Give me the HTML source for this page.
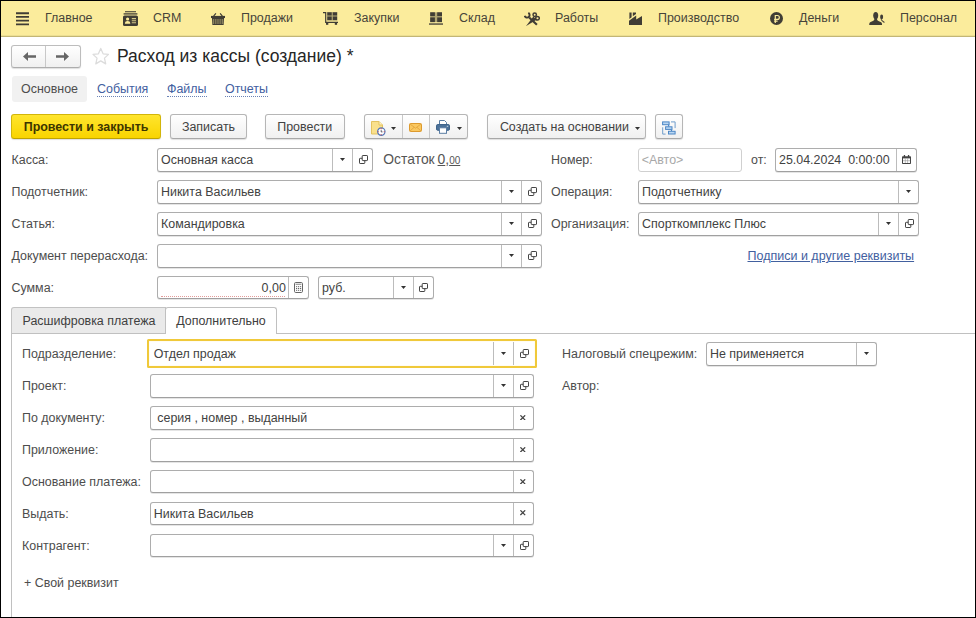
<!DOCTYPE html>
<html lang="ru"><head><meta charset="utf-8"><title>Расход из кассы (создание) *</title>
<style>
html,body{margin:0;padding:0;background:#fff}
body{width:976px;height:618px;position:relative;overflow:hidden;font-family:"Liberation Sans",sans-serif;font-size:12.45px;color:#333}
#frame{position:absolute;left:0;top:0;width:974px;height:616px;border:1px solid #000;z-index:50;pointer-events:none}
#top{position:absolute;left:1px;top:1px;width:974px;height:35px;background:#fbec9c;border-bottom:1px solid #c3b676;box-shadow:inset 0 -1px 0 #ecdf93}
.mic{position:absolute;line-height:0}
.mtx{position:absolute;top:9.900px;line-height:16px;color:#47443a;white-space:nowrap}
.abs{position:absolute}
.lbl{position:absolute;line-height:20px;white-space:nowrap;color:#4d4d4d}
.fld{position:absolute;box-sizing:border-box;border:1px solid #adadad;border-bottom-color:#a0a0a0;border-radius:3px;background:#fff;display:flex;box-shadow:0 1px 0 rgba(0,0,0,.10)}
.fld .val{flex:1;min-width:0;padding:.2px 4px 0 3px;line-height:22px;white-space:pre;overflow:hidden;color:#424242}
.fld .fb{box-sizing:border-box;border-left:1px solid #bcbcbc;display:flex;align-items:center;justify-content:center;flex:none}
.fld.pn .val{padding-left:2.800px}
.fld.sm .val{padding-right:2.200px}
.fld.dis{border-color:#d0d0d0;box-shadow:none}
.fld.dis .val{color:#a8a8a8;padding-left:2.700px}
.fld.act{border:2px solid #f0c93a;box-shadow:inset 0 0 1px 0 #f7df86;border-radius:1.500px}
.fld.act .val{line-height:24px;padding:.4px 4px 0 4.700px}
.fld.act .fb{margin:1px 0;border-left-color:#bcbcbc}
.btn{position:absolute;box-sizing:border-box;border:1px solid #b6b6b6;border-bottom-color:#a8a8a8;border-radius:3px;background:linear-gradient(#fff,#f0f0f0);box-shadow:0 1px 1px rgba(0,0,0,.13);display:flex;align-items:center;justify-content:center;white-space:nowrap;color:#424242}
.btn.tx{padding-top:1.800px}
.btn.def{background:linear-gradient(#ffe52e,#f9d400);border-color:#d2b50a;border-bottom-color:#bfa300;font-weight:bold;color:#3d3500}
.lnk{color:#42609f}
</style></head><body>
<div id="frame"></div>
<div id="top"></div>
<div class="mic" style="left:16px;top:12px"><svg width="13" height="13.500" viewBox="0 0 13 13.500"><path d="M0 1.250h13M0 4.950h13M0 8.650h13M0 12.350h13" stroke="#403d35" stroke-width="1.800"/></svg></div><div class="mtx" style="left:45px">Главное</div>
<div class="mic" style="left:123px;top:11px"><svg width="15" height="15" viewBox="0 0 15 15"><path d="M2 .7h11" stroke="#403d35" stroke-opacity=".9" stroke-width="1.200"/><path d="M.6 2.900h13.800" stroke="#403d35" stroke-width="1.300"/><rect x="0" y="4.500" width="15" height="10.500" rx="1.600" fill="#403d35"/><circle cx="4.600" cy="8" r="1.600" fill="#fbec9c"/><path d="M1.900 12.700c0-2 1.200-2.700 2.700-2.700s2.700 .7 2.700 2.700z" fill="#fbec9c"/><path d="M8.800 7.600h4.200M8.800 9.700h4.200M8.800 11.800h4.200" stroke="#fbec9c" stroke-opacity=".8" stroke-width="1.100"/></svg></div><div class="mtx" style="left:153px">CRM</div>
<div class="mic" style="left:211px;top:13px"><svg width="14" height="12" viewBox="0 0 14 12"><path d="M2.600 3.200L4.900 .3M11.400 3.200L9.100 .3" stroke="#403d35" stroke-width="1.100" fill="none"/><rect x="0" y="2.900" width="14" height="2.100" fill="#403d35"/><path d="M.9 5h12.200l-.5 7H1.400z" fill="#403d35"/><path d="M2.400 6v5M4.250 6v5M6.100 6v5M7.950 6v5M9.800 6v5M11.650 6v5" stroke="#fbec9c" stroke-opacity=".7" stroke-width=".65"/></svg></div><div class="mtx" style="left:241px">Продажи</div>
<div class="mic" style="left:323px;top:12px"><svg width="15" height="13" viewBox="0 0 15 13"><path d="M0 .6h2.700v9.700h12.300" stroke="#403d35" stroke-width="1.200" fill="none"/><rect x="4" y="0" width="10.300" height="8.600" fill="#403d35" fill-opacity=".35"/><rect x="4.300" y=".3" width="4.400" height="3.200" fill="#403d35"/><rect x="9.800" y=".3" width="4.300" height="3.200" fill="#403d35"/><rect x="4.300" y="4.500" width="4.400" height="3.600" fill="#403d35"/><rect x="9.800" y="4.500" width="4.300" height="3.600" fill="#403d35"/><rect x="3" y="10.500" width="2.300" height="2.300" fill="#403d35"/><rect x="11.800" y="10.500" width="2.300" height="2.300" fill="#403d35"/></svg></div><div class="mtx" style="left:354px">Закупки</div>
<div class="mic" style="left:429px;top:12px"><svg width="14" height="13" viewBox="0 0 14 13"><rect x="1.200" y=".3" width="11.800" height="9.800" fill="#403d35" fill-opacity=".4"/><rect x="1.200" y=".3" width="4.700" height="3.800" fill="#403d35"/><rect x="8.200" y=".3" width="4.800" height="3.800" fill="#403d35"/><rect x="1.200" y="5.400" width="4.700" height="4.700" fill="#403d35"/><rect x="8.200" y="5.400" width="4.800" height="4.700" fill="#403d35"/><rect x="0" y="11.400" width="14" height="1.300" fill="#403d35"/></svg></div><div class="mtx" style="left:459px">Склад</div>
<div class="mic" style="left:524px;top:11.5px"><svg width="16" height="14.500" viewBox="0 0 16 14.500" fill="none" stroke="#403d35"><path d="M.7 3.800A2.500 2.500 0 1 0 4.300 .9" stroke-width="1.900"/><path d="M5.200 5.500L12.900 12.700" stroke-width="2.100"/><circle cx="10.700" cy="2.800" r="1.700" stroke-width="1.500"/><circle cx="13.500" cy="6.200" r="1.800" stroke-width="1.500"/><path d="M9.400 4.400L12.500 7.700L2 14.100z" fill="#403d35" stroke="none"/></svg></div><div class="mtx" style="left:555px">Работы</div>
<div class="mic" style="left:628.5px;top:12px"><svg width="13.500" height="13" viewBox="0 0 13.500 13" fill="#403d35"><path d="M0 13V8.800L7.200 3.400V7.600L13.200 4V13z"/><path d="M.4 .4h2.200v4.850L.4 6.900z"/><path d="M3.800 .4H7v1.550L3.800 4.350z"/></svg></div><div class="mtx" style="left:658px">Производство</div>
<div class="mic" style="left:770px;top:12px"><svg width="13" height="13" viewBox="0 0 13 13"><circle cx="6.500" cy="6.500" r="6.500" fill="#403d35"/><path d="M5.300 10.900V3.500h2.100a1.900 1.900 0 0 1 0 3.900H4.100M4.100 9.100H7.600" stroke="#fbec9c" stroke-width="1.200" fill="none"/></svg></div><div class="mtx" style="left:799px">Деньги</div>
<div class="mic" style="left:869px;top:12px"><svg width="16" height="13" viewBox="0 0 16 13" fill="#403d35"><ellipse cx="12.600" cy="5" rx="1.500" ry="2.400"/><path d="M12.100 7.400c.5 1.200 1.500 1.900 3.300 3.100" stroke="#403d35" stroke-width="1.100" fill="none"/><ellipse cx="6.700" cy="3.600" rx="2.500" ry="3.500"/><path d="M5.300 6h2.800v1.600c0 .9 .8 1.300 2.400 1.800c1.800 .5 2.600 1.200 2.600 3.500H.2c0-2.300 .8-3 2.600-3.500c1.600-.5 2.500-.9 2.500-1.800z"/></svg></div><div class="mtx" style="left:900px">Персонал</div>
<div class="btn" style="left:11px;top:45px;width:70px;height:23px;justify-content:flex-start;border-color:#bdbdbd;border-bottom-color:#adadad"><span style="width:33px;height:100%;display:flex;align-items:center;justify-content:center;border-right:1px solid #c8c8c8"><svg width="13" height="9" viewBox="0 0 13 9" style="margin-left:2px"><path d="M0 4.500L5 0v3.300h8v2.400H5V9z" fill="#666"/></svg></span><span style="width:34px;height:100%;display:flex;align-items:center;justify-content:center"><svg width="13" height="9" viewBox="0 0 13 9" style="margin-right:1px"><path d="M13 4.500L8 0v3.300H0v2.400h8V9z" fill="#666"/></svg></span></div>
<svg class="abs" style="left:91.800px;top:47px" width="17.500" height="18.800" viewBox="0 0 18 19"><path d="M9 1.300l2.400 5.600 5.600.5-4.200 3.900 1.300 5.900L9 14.100l-5.100 3.100 1.300-5.900L1 7.400l5.600-.5z" fill="#fff" stroke="#dcdcdc" stroke-width="1.300" stroke-linejoin="round"/></svg>
<div class="abs" id="title" style="left:117px;top:44.600px;font-size:17.500px;line-height:22px;color:#262626;white-space:nowrap">Расход из кассы (создание) *</div>
<div class="abs" style="left:11.500px;top:76px;width:75.500px;height:26px;background:#f1f1f1;border-radius:3px"></div>
<div class="lbl " style="left:21px;top:79.0px;">Основное</div>
<div class="lbl " style="left:97px;top:79.0px;"><span class="lnk" style="border-bottom:1px dotted #6a82b5;line-height:13px;display:inline-block">События</span></div>
<div class="lbl " style="left:167px;top:79.0px;"><span class="lnk" style="border-bottom:1px dotted #6a82b5;line-height:13px;display:inline-block">Файлы</span></div>
<div class="lbl " style="left:225px;top:79.0px;"><span class="lnk" style="border-bottom:1px dotted #6a82b5;line-height:13px;display:inline-block">Отчеты</span></div>
<div class="btn def tx" style="left:11.2px;top:114px;width:149.8px;height:25px;">Провести и закрыть</div>
<div class="btn tx" style="left:170px;top:114px;width:77px;height:25px;">Записать</div>
<div class="btn tx" style="left:265px;top:114px;width:79.5px;height:25px;">Провести</div>
<div class="btn" style="left:364px;top:114px;width:103.500px;height:25px;justify-content:flex-start"><span style="width:38px;height:100%;box-sizing:border-box;padding-left:5.900px;display:flex;align-items:center;justify-content:flex-start;gap:5.100px;border-right:1px solid #c8c8c8"><span style="line-height:0;margin-top:3px"><svg width="15" height="15" viewBox="0 0 15 15"><path d="M.5 .5h7.500l3.500 3.500V13H.5z" fill="#f9e08c" stroke="#e3c260"/><path d="M8 .5v3.500h3.500" fill="#fff4c8" stroke="#e3c260"/><circle cx="10.300" cy="10.600" r="3.700" fill="#fff" stroke="#5579b8" stroke-width="1.200"/><path d="M10.200 7.200v1M10.200 13.200v1M6.700 10.700h1M12.700 10.700h1" stroke="#d04040" stroke-width="1.100"/><path d="M10.200 9.200v1.700h1.300" stroke="#445" stroke-width=".9" fill="none"/></svg></span><svg class="ic" width="5" height="3" viewBox="0 0 5 3" style="margin-top:4.600px"><path d="M0 0h5L2.500 3z" fill="#333"/></svg></span><span style="width:27px;height:100%;box-sizing:border-box;display:flex;align-items:center;justify-content:center;border-right:1px solid #c8c8c8"><span style="line-height:0;margin-top:2px;margin-right:1.500px"><svg width="13" height="9" viewBox="0 0 13 9"><rect x=".5" y=".5" width="12" height="8" rx="1" fill="#fac860" stroke="#dd9a2e"/><path d="M1 1l5.500 4.200L12 1M1 8l4-3.600M12 8L8 4.400" stroke="#e2a540" fill="none" stroke-width=".9"/></svg></span></span><span style="flex:1;height:100%;box-sizing:border-box;padding-left:6.300px;display:flex;align-items:center;justify-content:flex-start;gap:6.400px"><span style="line-height:0;margin-top:.6px"><svg width="14" height="14" viewBox="0 0 14 14"><path d="M3.500 4.500V.5h5l2 2v2" fill="#fff" stroke="#5a7da3"/><rect x=".5" y="4.500" width="13" height="5.800" rx="1.300" fill="#4b7199" stroke="#3f648b"/><rect x="3.500" y="7.800" width="7" height="5.500" fill="#fff" stroke="#5a7da3"/><path d="M10.800 6.300h1.400" stroke="#d5e4f2" stroke-width=".9"/></svg></span><svg class="ic" width="5" height="3" viewBox="0 0 5 3" style="margin-top:4.600px"><path d="M0 0h5L2.500 3z" fill="#333"/></svg></span></div>
<div class="btn " style="left:487px;top:114px;width:159px;height:25px;justify-content:flex-start;padding-left:11.900px"><span style="margin-right:5.800px;position:relative;top:.9px">Создать на основании</span><svg class="ic" width="5" height="3" viewBox="0 0 5 3" style="margin-top:4.600px"><path d="M0 0h5L2.500 3z" fill="#333"/></svg></div>
<div class="btn " style="left:655px;top:114px;width:28px;height:25px;"><svg width="14" height="14" viewBox="0 0 14 14" fill="none" style="margin-top:3.500px"><path d="M9 .9H13.100V7.100M.7 6.300V13.100H3.600" stroke="#6f9dcb" stroke-width="1"/><path d="M6.600 4V5.500M9.500 8.700V10" stroke="#4a86c5" stroke-width="1.200"/><rect x=".6" y=".9" width="6.500" height="2.800" fill="#b9d6f2" stroke="#4a86c5"/><rect x="3.600" y="5.800" width="6.400" height="2.600" fill="#b9d6f2" stroke="#4a86c5"/><rect x="6.500" y="10.300" width="6.600" height="2.700" fill="#b9d6f2" stroke="#4a86c5"/></svg></div>
<div class="lbl " style="left:11.5px;top:150.3px;">Касса:</div>
<div class="fld " style="left:157px;top:148px;width:216px;height:23.5px"><span class="val" style="text-align:left">Основная касса</span><span class="fb" style="width:20px"><svg class="ic" width="5" height="3" viewBox="0 0 5 3"><path d="M0 0h5L2.500 3z" fill="#333"/></svg></span><span class="fb" style="width:20px"><svg class="ic" width="9" height="9" viewBox="0 0 9 9" fill="none" stroke="#444" stroke-width="1" style="position:relative;left:.7px;top:0"><rect x="3.200" y=".5" width="5.300" height="5.100" rx=".6"/><path d="M3.200 3.300H1.100a.6.6 0 0 0-.6.600v4a.6.600 0 0 0 .6.600h4.100a.6.600 0 0 0 .6-.600V5.600"/></svg></span></div>
<div class="abs" style="left:383.300px;top:149.200px;line-height:20px;white-space:nowrap;color:#555"><span style="font-size:13.900px">Остаток </span><span style="font-size:13.900px;text-decoration:underline;margin-left:-1px">0</span><span style="font-size:13.900px">,</span><span style="font-size:10px;text-decoration:underline">00</span></div>
<div class="lbl " style="left:551px;top:150.3px;">Номер:</div>
<div class="fld dis" style="left:638px;top:148px;width:104px;height:23.5px"><span class="val" style="text-align:left">&lt;Авто&gt;</span></div>
<div class="lbl " style="left:751px;top:150.3px;">от:</div>
<div class="fld " style="left:775px;top:148px;width:142px;height:23.5px"><span class="val" style="text-align:left">25.04.2024  0:00:00</span><span class="fb" style="width:20px"><svg class="ic" width="9" height="9" viewBox="0 0 9 9" style="margin-top:-1px"><rect x="0" y="1.200" width="9" height="7.800" rx=".8" fill="#444"/><rect x="1" y="3.400" width="7" height="4.600" fill="#fff"/><path d="M3.300 3.400v4.600M5.600 3.400v4.600M1 5.700h7" stroke="#999" stroke-width=".6"/><rect x="1.800" y="0" width="1.300" height="2" fill="#444"/><rect x="5.900" y="0" width="1.300" height="2" fill="#444"/></svg></span></div>
<div class="lbl " style="left:11.5px;top:182.3px;">Подотчетник:</div>
<div class="fld " style="left:157px;top:180px;width:385px;height:23.5px"><span class="val" style="text-align:left">Никита Васильев</span><span class="fb" style="width:20px"><svg class="ic" width="5" height="3" viewBox="0 0 5 3"><path d="M0 0h5L2.500 3z" fill="#333"/></svg></span><span class="fb" style="width:20px"><svg class="ic" width="9" height="9" viewBox="0 0 9 9" fill="none" stroke="#444" stroke-width="1" style="position:relative;left:.7px;top:0"><rect x="3.200" y=".5" width="5.300" height="5.100" rx=".6"/><path d="M3.200 3.300H1.100a.6.6 0 0 0-.6.600v4a.6.600 0 0 0 .6.600h4.100a.6.600 0 0 0 .6-.600V5.600"/></svg></span></div>
<div class="lbl " style="left:551px;top:182.3px;">Операция:</div>
<div class="fld " style="left:638px;top:180px;width:281px;height:23.5px"><span class="val" style="text-align:left">Подотчетнику</span><span class="fb" style="width:20px"><svg class="ic" width="5" height="3" viewBox="0 0 5 3"><path d="M0 0h5L2.500 3z" fill="#333"/></svg></span></div>
<div class="lbl " style="left:11.5px;top:214.3px;">Статья:</div>
<div class="fld " style="left:157px;top:212px;width:385px;height:23.5px"><span class="val" style="text-align:left">Командировка</span><span class="fb" style="width:20px"><svg class="ic" width="5" height="3" viewBox="0 0 5 3"><path d="M0 0h5L2.500 3z" fill="#333"/></svg></span><span class="fb" style="width:20px"><svg class="ic" width="9" height="9" viewBox="0 0 9 9" fill="none" stroke="#444" stroke-width="1" style="position:relative;left:.7px;top:0"><rect x="3.200" y=".5" width="5.300" height="5.100" rx=".6"/><path d="M3.200 3.300H1.100a.6.6 0 0 0-.6.600v4a.6.600 0 0 0 .6.600h4.100a.6.600 0 0 0 .6-.600V5.600"/></svg></span></div>
<div class="lbl " style="left:551px;top:214.3px;">Организация:</div>
<div class="fld " style="left:638px;top:212px;width:281px;height:23.5px"><span class="val" style="text-align:left">Спорткомплекс Плюс</span><span class="fb" style="width:20px"><svg class="ic" width="5" height="3" viewBox="0 0 5 3"><path d="M0 0h5L2.500 3z" fill="#333"/></svg></span><span class="fb" style="width:20px"><svg class="ic" width="9" height="9" viewBox="0 0 9 9" fill="none" stroke="#444" stroke-width="1" style="position:relative;left:.7px;top:0"><rect x="3.200" y=".5" width="5.300" height="5.100" rx=".6"/><path d="M3.200 3.300H1.100a.6.6 0 0 0-.6.600v4a.6.600 0 0 0 .6.600h4.100a.6.600 0 0 0 .6-.600V5.600"/></svg></span></div>
<div class="lbl " style="left:11.5px;top:246.3px;">Документ перерасхода:</div>
<div class="fld " style="left:157px;top:244px;width:385px;height:23.5px"><span class="val" style="text-align:left"></span><span class="fb" style="width:20px"><svg class="ic" width="5" height="3" viewBox="0 0 5 3"><path d="M0 0h5L2.500 3z" fill="#333"/></svg></span><span class="fb" style="width:20px"><svg class="ic" width="9" height="9" viewBox="0 0 9 9" fill="none" stroke="#444" stroke-width="1" style="position:relative;left:.7px;top:0"><rect x="3.200" y=".5" width="5.300" height="5.100" rx=".6"/><path d="M3.200 3.300H1.100a.6.6 0 0 0-.6.600v4a.6.600 0 0 0 .6.600h4.100a.6.600 0 0 0 .6-.600V5.600"/></svg></span></div>
<div class="lbl " style="left:747.5px;top:246.3px;"><span class="lnk" style="text-decoration:underline;font-size:12.500px">Подписи и другие реквизиты</span></div>
<div class="lbl " style="left:11.5px;top:278.3px;">Сумма:</div>
<div class="fld sm" style="left:157px;top:275.8px;width:152px;height:23.5px"><span class="val" style="text-align:right">0,00</span><span class="fb" style="width:20px"><svg class="ic" width="9" height="11" viewBox="0 0 9 11"><rect x=".5" y=".5" width="8" height="10" rx="1.200" fill="#fff" stroke="#666"/><rect x="1.600" y="1.700" width="5.800" height="1.200" fill="#999"/><path d="M2 4.700h5.200M2 6.500h5.200M2 8.300h5.200" stroke="#666" stroke-width="1" stroke-dasharray="1.200 0.800"/></svg></span><span style="position:absolute;left:3px;right:23px;bottom:1.500px;border-bottom:1px dotted #e39c9a"></span></div>
<div class="fld " style="left:318px;top:275.8px;width:115.5px;height:23.5px"><span class="val" style="text-align:left">руб.</span><span class="fb" style="width:20px"><svg class="ic" width="5" height="3" viewBox="0 0 5 3"><path d="M0 0h5L2.500 3z" fill="#333"/></svg></span><span class="fb" style="width:20px"><svg class="ic" width="9" height="9" viewBox="0 0 9 9" fill="none" stroke="#444" stroke-width="1" style="position:relative;left:.7px;top:0"><rect x="3.200" y=".5" width="5.300" height="5.100" rx=".6"/><path d="M3.200 3.300H1.100a.6.6 0 0 0-.6.600v4a.6.600 0 0 0 .6.600h4.100a.6.600 0 0 0 .6-.600V5.600"/></svg></span></div>
<div class="abs" style="left:11px;top:333px;width:965px;height:1px;background:#c0c0c0"></div>
<div class="abs" style="left:11px;top:333px;width:1px;height:285px;background:#c0c0c0"></div>
<div class="abs" style="left:11px;top:307.400px;width:155px;height:25.600px;box-sizing:border-box;border:1px solid #c2c2c2;border-bottom:none;border-radius:3px 0 0 0;background:#eaeaea;text-align:center;text-indent:1px;line-height:26px;color:#404040">Расшифровка платежа</div>
<div class="abs" style="left:165px;top:307.400px;width:112px;height:26.600px;box-sizing:border-box;border:1px solid #c0c0c0;border-bottom:none;border-radius:3px 3px 0 0;background:#fff;text-align:center;line-height:26px;color:#404040">Дополнительно</div>
<div class="lbl " style="left:22px;top:344.3px;">Подразделение:</div>
<div class="fld act" style="left:147px;top:339.25px;width:389.5px;height:28.75px"><span class="val" style="text-align:left">Отдел продаж</span><span class="fb" style="width:20px"><svg class="ic" width="5" height="3" viewBox="0 0 5 3"><path d="M0 0h5L2.500 3z" fill="#333"/></svg></span><span class="fb" style="width:20px"><svg class="ic" width="9" height="9" viewBox="0 0 9 9" fill="none" stroke="#444" stroke-width="1" style="position:relative;left:.7px;top:0"><rect x="3.200" y=".5" width="5.300" height="5.100" rx=".6"/><path d="M3.200 3.300H1.100a.6.6 0 0 0-.6.600v4a.6.600 0 0 0 .6.600h4.100a.6.600 0 0 0 .6-.600V5.600"/></svg></span><span style="width:1.500px;flex:none"></span></div>
<div class="lbl " style="left:562px;top:344.3px;">Налоговый спецрежим:</div>
<div class="fld " style="left:706px;top:342px;width:170.5px;height:23.5px"><span class="val" style="text-align:left">Не применяется</span><span class="fb" style="width:20px"><svg class="ic" width="5" height="3" viewBox="0 0 5 3"><path d="M0 0h5L2.500 3z" fill="#333"/></svg></span></div>
<div class="lbl " style="left:22px;top:376.3px;">Проект:</div>
<div class="fld pn" style="left:150px;top:374px;width:384px;height:23.5px"><span class="val" style="text-align:left"></span><span class="fb" style="width:20px"><svg class="ic" width="5" height="3" viewBox="0 0 5 3"><path d="M0 0h5L2.500 3z" fill="#333"/></svg></span><span class="fb" style="width:20px"><svg class="ic" width="9" height="9" viewBox="0 0 9 9" fill="none" stroke="#444" stroke-width="1" style="position:relative;left:.7px;top:0"><rect x="3.200" y=".5" width="5.300" height="5.100" rx=".6"/><path d="M3.200 3.300H1.100a.6.6 0 0 0-.6.600v4a.6.600 0 0 0 .6.600h4.100a.6.600 0 0 0 .6-.600V5.600"/></svg></span></div>
<div class="lbl " style="left:562px;top:376.3px;">Автор:</div>
<div class="lbl " style="left:22px;top:408.3px;">По документу:</div>
<div class="fld pn" style="left:150px;top:406px;width:384px;height:23.5px"><span class="val" style="text-align:left"> серия , номер , выданный</span><span class="fb" style="width:20px"><svg class="ic" width="5.600" height="5.400" viewBox="0 0 5.600 5.400" stroke="#444" stroke-width="1.250" style="margin-right:1.500px;margin-bottom:.5px"><path d="M.4 .3l4.800 4.800M5.200 .3L.4 5.100"/></svg></span></div>
<div class="lbl " style="left:22px;top:440.3px;">Приложение:</div>
<div class="fld pn" style="left:150px;top:438px;width:384px;height:23.5px"><span class="val" style="text-align:left"></span><span class="fb" style="width:20px"><svg class="ic" width="5.600" height="5.400" viewBox="0 0 5.600 5.400" stroke="#444" stroke-width="1.250" style="margin-right:1.500px;margin-bottom:.5px"><path d="M.4 .3l4.800 4.800M5.200 .3L.4 5.100"/></svg></span></div>
<div class="lbl " style="left:22px;top:472.3px;">Основание платежа:</div>
<div class="fld pn" style="left:150px;top:470.2px;width:384px;height:23.3px"><span class="val" style="text-align:left"></span><span class="fb" style="width:20px"><svg class="ic" width="5.600" height="5.400" viewBox="0 0 5.600 5.400" stroke="#444" stroke-width="1.250" style="margin-right:1.500px;margin-bottom:.5px"><path d="M.4 .3l4.800 4.800M5.200 .3L.4 5.100"/></svg></span></div>
<div class="lbl " style="left:22px;top:503.8px;">Выдать:</div>
<div class="fld pn" style="left:150px;top:501.6px;width:384px;height:23px"><span class="val" style="text-align:left">Никита Васильев</span><span class="fb" style="width:20px"><svg class="ic" width="5.600" height="5.400" viewBox="0 0 5.600 5.400" stroke="#444" stroke-width="1.250" style="margin-right:1.500px;margin-bottom:.5px"><path d="M.4 .3l4.800 4.800M5.200 .3L.4 5.100"/></svg></span></div>
<div class="lbl " style="left:22px;top:535.5999999999999px;">Контрагент:</div>
<div class="fld pn" style="left:150px;top:533.5px;width:384px;height:23px"><span class="val" style="text-align:left"></span><span class="fb" style="width:20px"><svg class="ic" width="5" height="3" viewBox="0 0 5 3"><path d="M0 0h5L2.500 3z" fill="#333"/></svg></span><span class="fb" style="width:20px"><svg class="ic" width="9" height="9" viewBox="0 0 9 9" fill="none" stroke="#444" stroke-width="1" style="position:relative;left:.7px;top:0"><rect x="3.200" y=".5" width="5.300" height="5.100" rx=".6"/><path d="M3.200 3.300H1.100a.6.6 0 0 0-.6.600v4a.6.600 0 0 0 .6.600h4.100a.6.600 0 0 0 .6-.600V5.600"/></svg></span></div>
<div class="lbl " style="left:24px;top:572.6999999999999px;">+ Свой реквизит</div>
</body></html>
